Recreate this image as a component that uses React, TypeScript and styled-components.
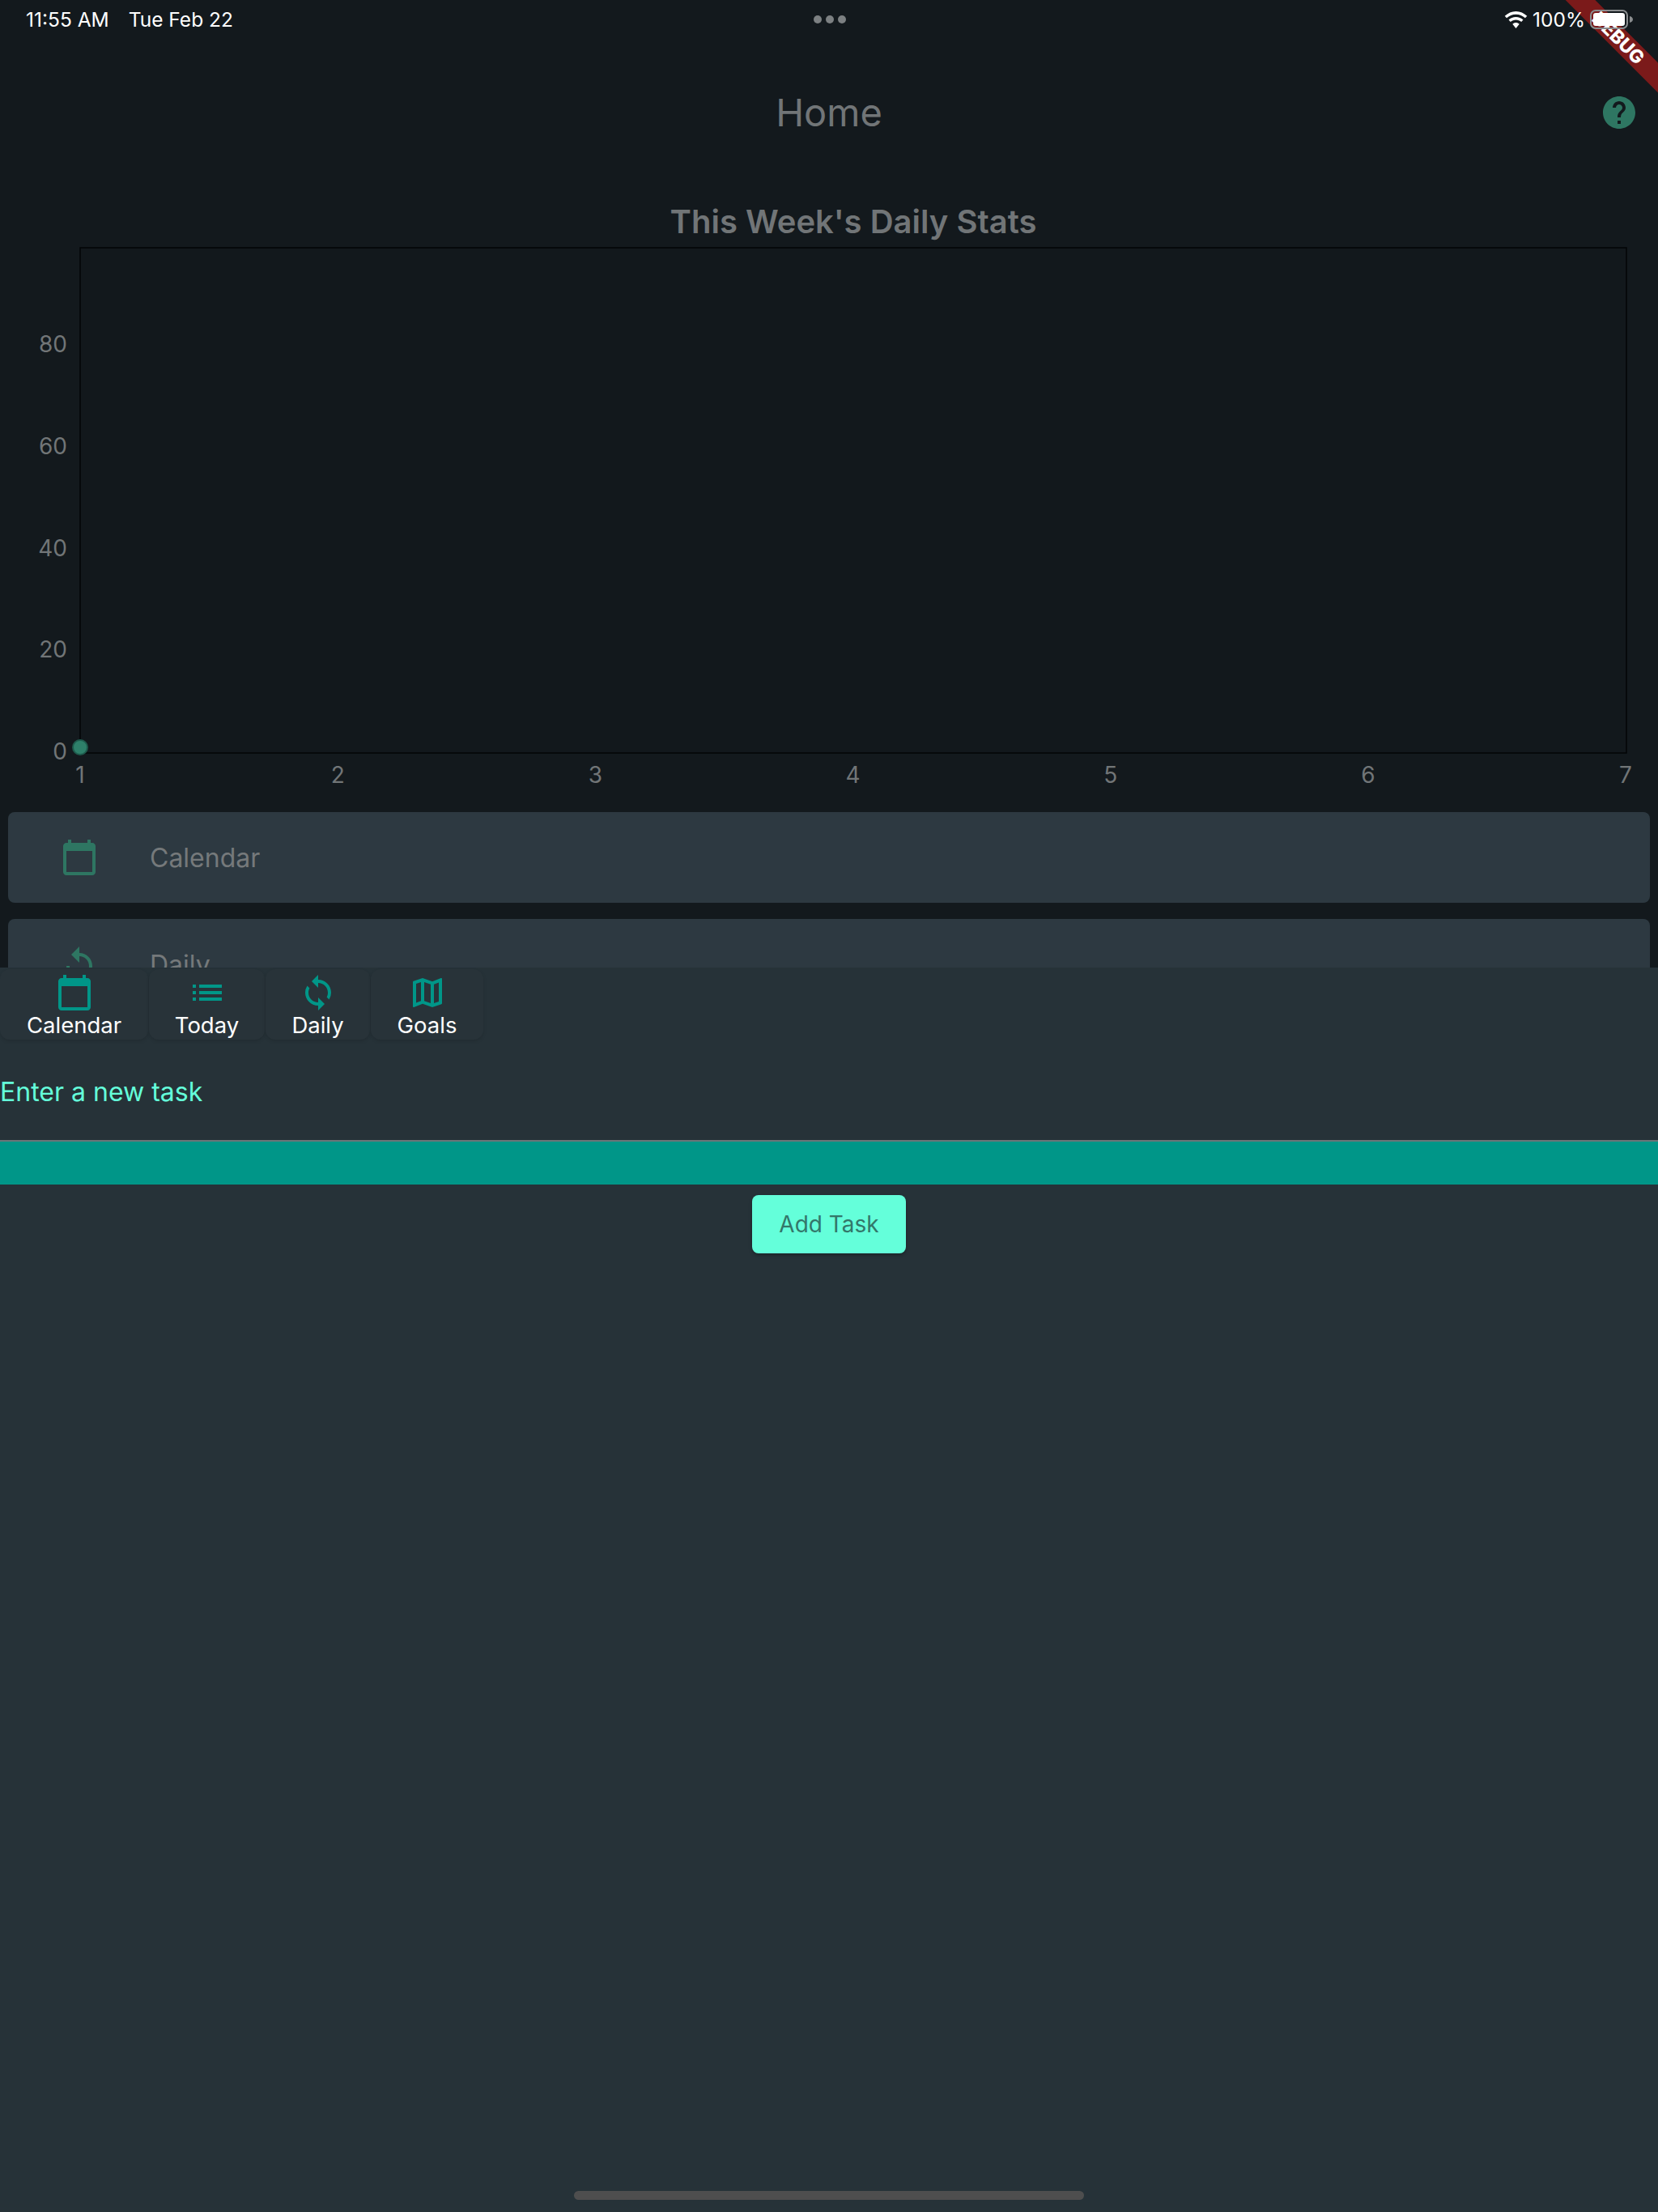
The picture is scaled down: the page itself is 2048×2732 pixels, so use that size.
import { createGlobalStyle, styled } from "styled-components";
import { MdCalendarToday, MdHelp, MdList, MdOutlineMap, MdReplay, MdSync } from "react-icons/md";
import type { IconType } from "react-icons";

const GlobalStyle = createGlobalStyle`
  html, body {
    margin: 0;
    padding: 0;
    background: #263238;
  }
  body {
    font-family: Inter, "Liberation Sans", sans-serif;
  }
`;

const Page = styled.div`
  position: relative;
  width: 2048px;
  height: 2732px;
  display: flex;
  flex-direction: column;
  overflow: hidden;
  background: #263238;
`;

const Backdrop = styled.div`
  height: 1195px;
  flex: none;
  overflow: hidden;
  background: #13191d;
`;

const StatusBar = styled.div`
  position: relative;
  z-index: 2;
  height: 48px;
  padding: 0 30px 0 32px;
  display: flex;
  align-items: center;
  justify-content: space-between;
  color: #fff;
  font-size: 24.5px;
`;

const StatusGroup = styled.div`
  width: 400px;
  display: flex;
  align-items: center;
  gap: 24px;
`;

const StatusRight = styled(StatusGroup)`
  justify-content: flex-end;
  gap: 6px;
`;

const Dots = styled.div`
  display: flex;
  gap: 5px;
`;

const Dot = styled.span`
  width: 10px;
  height: 10px;
  border-radius: 50%;
  background: #7c8082;
`;

const AppBar = styled.header`
  position: relative;
  height: 184px;
  padding-bottom: 3px;
  box-sizing: border-box;
  display: flex;
  align-items: center;
  justify-content: center;
  color: #717577;
  font-size: 47px;
`;

const HelpButton = styled.span`
  position: absolute;
  right: 24px;
  top: 67px;
  display: flex;
  color: #2e7662;
`;

const ChartTitle = styled.h2`
  margin: 0;
  padding: 19px 0 0 60px;
  height: 73px;
  box-sizing: border-box;
  text-align: center;
  color: #717577;
  font-size: 40px;
  line-height: 46px;
  font-weight: 600;
`;

const ChartSvg = styled.svg`
  display: block;

  text {
    font-family: Inter, "Liberation Sans", sans-serif;
    font-size: 28px;
    fill: #717577;
  }
`;

const CardList = styled.div`
  margin-top: 18px;
  padding: 0 10px;
  display: flex;
  flex-direction: column;
  gap: 20px;
`;

const Card = styled.div`
  height: 112px;
  flex: none;
  padding-left: 64px;
  display: flex;
  align-items: center;
  gap: 63px;
  border-radius: 8px;
  background: #2d3941;
  color: #2e7662;
`;

const CardLabel = styled.span`
  color: #75797b;
  font-size: 32px;
`;

const Sheet = styled.section`
  flex: 1;
  display: flex;
  flex-direction: column;
  background: #263238;
`;

const Tabs = styled.nav`
  display: flex;
  gap: 1px;
  padding-top: 2px;
`;

const Tab = styled.div<{ $width: number }>`
  width: ${({ $width }) => $width}px;
  height: 87px;
  padding-top: 5px;
  box-sizing: border-box;
  display: flex;
  flex-direction: column;
  align-items: center;
  border-radius: 12px;
  background: #283339;
  box-shadow: 0 2px 4px rgba(0, 0, 0, 0.12);
  color: #009688;
`;

const TabLabel = styled.span`
  margin-top: 1px;
  color: #fff;
  font-size: 27.5px;
  line-height: 30px;
`;

const FieldLabel = styled.label`
  display: block;
  margin-top: 45px;
  color: #64ffda;
  font-size: 32px;
  line-height: 40px;
`;

const FieldInput = styled.div`
  margin-top: 39px;
  height: 53px;
  border-top: 2px solid #6b7578;
  background: #009688;
`;

const AddButton = styled.button`
  align-self: center;
  margin-top: 13px;
  width: 190px;
  height: 72px;
  border: 0;
  border-radius: 8px;
  background: #64ffda;
  box-shadow: 0 2px 4px rgba(0, 0, 0, 0.3);
  color: #33776a;
  font-family: inherit;
  font-size: 28px;
`;

const HomeIndicator = styled.div`
  position: absolute;
  left: 709px;
  bottom: 15px;
  width: 630px;
  height: 11px;
  border-radius: 6px;
  background: #4e4e4e;
`;

const DebugBanner = styled.div`
  position: absolute;
  z-index: 1;
  top: 34px;
  left: 1909px;
  width: 180px;
  height: 26px;
  transform: rotate(45deg);
  display: flex;
  align-items: center;
  justify-content: center;
  background: #7b1a1a;
  color: #fff;
  font-size: 23px;
  font-weight: 800;
`;

const WifiIcon = () => (
  <svg width="29" height="21" viewBox="2 1 24 18">
    <path fill="#fff" d="M14 4.2c3.8 0 7.2 1.500 9.800 3.900l2-2.100C22.600 2.900 18.500 1 14 1S5.400 2.900 2.200 6l2 2.100C6.800 5.700 10.200 4.200 14 4.200z" />
    <path fill="#fff" d="M14 10c2.200 0 4.200.9 5.700 2.200l2-2.100C19.700 8.200 17 7 14 7s-5.700 1.200-7.700 3.100l2 2.100C9.800 10.900 11.800 10 14 10z" />
    <path fill="#fff" d="M14 13c-1.400 0-2.600.5-3.600 1.400L14 19l3.600-4.600C16.600 13.500 15.400 13 14 13z" />
  </svg>
);

const BatteryIcon = () => (
  <svg width="54" height="24" viewBox="0 0 54 24">
    <rect x="1" y="1" width="45" height="22" rx="6" fill="none" stroke="#8a8d8f" strokeWidth="2" />
    <rect x="4" y="4" width="39" height="16" rx="3" fill="#fff" />
    <path d="M49 8c2.500.6 4 2.200 4 4s-1.500 3.400-4 4z" fill="#8a8d8f" />
  </svg>
);

const plot = { left: 99, right: 2009, top: 1, bottom: 625 };
const yTicks = [
  { label: "80", y: 120 },
  { label: "60", y: 246 },
  { label: "40", y: 372 },
  { label: "20", y: 497 },
  { label: "0", y: 623 },
];
const xTicks = ["1", "2", "3", "4", "5", "6", "7"];

const StatsChart = () => (
  <ChartSvg width="2048" height="680" viewBox="0 0 2048 680">
    <rect
      x={plot.left}
      y={plot.top}
      width={plot.right - plot.left}
      height={plot.bottom - plot.top}
      fill="#12181c"
      stroke="#030506"
      strokeWidth="1.5"
    />
    {yTicks.map((tick) => (
      <text key={tick.label} x="83" y={tick.y + 10} textAnchor="end">
        {tick.label}
      </text>
    ))}
    {xTicks.map((tick, i) => (
      <text
        key={tick}
        x={plot.left + (i * (plot.right - plot.left - 1)) / 6}
        y="662"
        textAnchor="middle"
      >
        {tick}
      </text>
    ))}
    <circle cx="99" cy="618" r="9" fill="#2e806a" stroke="#1e5a4c" strokeWidth="2" />
  </ChartSvg>
);

const cards: { label: string; Icon: IconType }[] = [
  { label: "Calendar", Icon: MdCalendarToday },
  { label: "Daily", Icon: MdReplay },
];

const tabs: { label: string; Icon: IconType; width: number }[] = [
  { label: "Calendar", Icon: MdCalendarToday, width: 183 },
  { label: "Today", Icon: MdList, width: 143 },
  { label: "Daily", Icon: MdSync, width: 129 },
  { label: "Goals", Icon: MdOutlineMap, width: 139 },
];

const App = () => (
  <Page>
    <GlobalStyle />
    <Backdrop>
      <StatusBar>
        <StatusGroup>
          <span>11:55 AM</span>
          <span>Tue Feb 22</span>
        </StatusGroup>
        <Dots>
          <Dot />
          <Dot />
          <Dot />
        </Dots>
        <StatusRight>
          <WifiIcon />
          <span>100%</span>
          <BatteryIcon />
        </StatusRight>
      </StatusBar>
      <AppBar>
        Home
        <HelpButton>
          <MdHelp size={48} />
        </HelpButton>
      </AppBar>
      <ChartTitle>This Week's Daily Stats</ChartTitle>
      <StatsChart />
      <CardList>
        {cards.map(({ label, Icon }) => (
          <Card key={label}>
            <Icon size={48} />
            <CardLabel>{label}</CardLabel>
          </Card>
        ))}
      </CardList>
    </Backdrop>
    <Sheet>
      <Tabs>
        {tabs.map(({ label, Icon, width }) => (
          <Tab key={label} $width={width}>
            <Icon size={48} />
            <TabLabel>{label}</TabLabel>
          </Tab>
        ))}
      </Tabs>
      <FieldLabel>Enter a new task</FieldLabel>
      <FieldInput />
      <AddButton>Add Task</AddButton>
    </Sheet>
    <DebugBanner>DEBUG</DebugBanner>
    <HomeIndicator />
  </Page>
);

export default App;
